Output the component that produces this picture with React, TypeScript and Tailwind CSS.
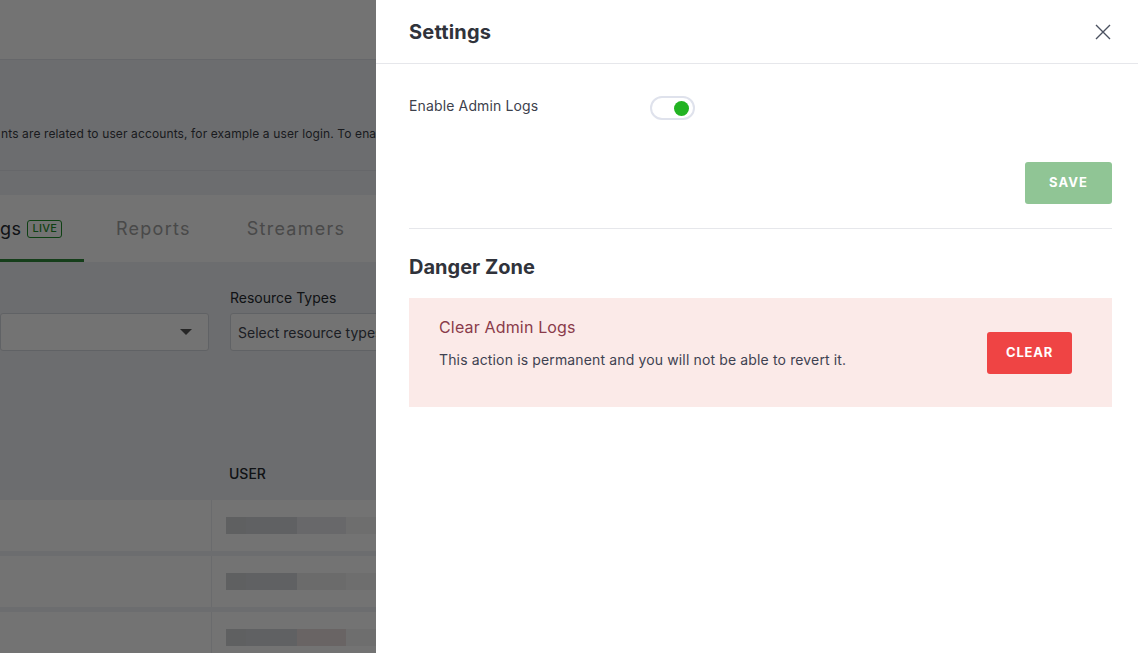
import React, { useState } from 'react';

const font = { fontFamily: 'Inter, "Noto Sans", sans-serif' };

const BlurRow: React.FC<{ tone: string }> = ({ tone }) => (
  <div className="flex items-center h-[17px]">
    <div className="w-[20px] h-full bg-[#d2d4d8]" />
    <div className="w-[51px] h-full bg-[#d6d8dc]" />
    <div className={`w-[49px] h-full ${tone}`} />
    <div className="w-[32px] h-full bg-[#f3f3f3]" />
  </div>
);

const BackgroundPage: React.FC = () => (
  <div className="w-full h-[653px] overflow-hidden bg-[#f0f2f5] flex flex-col" style={font}>
    <div className="h-[60px] bg-white border-b border-[#e3e5ea] shrink-0" />
    <div className="h-[111px] pt-[66px] border-b border-[#e3e5ea] shrink-0">
      <p className="text-[12px] leading-4 text-[#3a3d45] whitespace-nowrap pl-[1px] tracking-[0.01em]">
        nts are related to user accounts, for example a user login. To enable or disable admin logs, use the settings.
      </p>
    </div>
    <div className="h-[24px] shrink-0" />
    <div className="h-[67px] bg-white shrink-0 flex items-end">
      <div className="flex items-center h-full">
        <div className="relative h-full flex items-center w-[84px]">
          <span className="text-[18px] text-[#262a31] tracking-wide">gs</span>
          <span className="ml-[6px] px-[4px] h-[18px] flex items-center rounded-[3px] border border-[#1f8f2a] text-[11px] font-medium text-[#1f8f2a] tracking-wide">
            LIVE
          </span>
          <div className="absolute left-0 right-0 bottom-0 h-[3px] bg-[#2f8a3a]" />
        </div>
        <span className="ml-[32px] text-[18px] text-[#a3a3a3] tracking-[0.07em]">Reports</span>
        <span className="ml-[56px] text-[18px] text-[#a3a3a3] tracking-[0.07em]">Streamers</span>
      </div>
    </div>
    <div className="flex gap-[21px] pt-[26px] shrink-0">
      <div className="w-[209px] pt-[25px]">
        <div className="h-[38px] rounded-[3px] border border-[#d6d9df] bg-white flex items-center justify-end pr-[16px]">
          <span className="w-0 h-0 border-l-[6px] border-r-[6px] border-t-[6px] border-l-transparent border-r-transparent border-t-[#555]" />
        </div>
      </div>
      <div className="w-[300px]">
        <div className="text-[14px] leading-5 text-[#262a31] mb-[5px]">Resource Types</div>
        <div className="h-[38px] rounded-[3px] border border-[#d6d9df] bg-white flex items-center pl-[7px]">
          <span className="text-[14px] text-[#404550]">Select resource types</span>
        </div>
      </div>
    </div>
    <div className="h-[149px] shrink-0 flex items-end pb-[16px] pl-[229px]">
      <span className="text-[14px] font-medium text-[#262a31]">USER</span>
    </div>
    <div className="flex flex-col gap-[5px]">
      {['bg-[#e6e7ea]', 'bg-[#eeeeee]', 'bg-[#e9dede]'].map((tone, i) => (
        <div key={i} className="h-[51px] bg-white flex">
          <div className="w-[212px] border-r border-[#eceef1]" />
          <div className="pl-[14px] flex items-center">
            <BlurRow tone={tone} />
          </div>
        </div>
      ))}
    </div>
  </div>
);

const App: React.FC = () => {
  const [enabled, setEnabled] = useState(true);

  return (
    <div className="relative w-full h-[653px] overflow-hidden" style={font}>
      <BackgroundPage />

      {/* overlay */}
      <div className="absolute inset-0 bg-black/55" />

      {/* drawer */}
      <div className="absolute top-0 right-0 h-full w-[762px] bg-white flex flex-col">
        <div className="h-[64px] shrink-0 border-b border-[#e6e7eb] pl-[33px] pr-[27px] flex items-center justify-between">
          <h2 className="text-[20px] font-bold text-[#30333b] tracking-[0.01em]">Settings</h2>
          <button className="text-[#4b5160]" title="Close">
            <svg width="16" height="16" viewBox="0 0 16 16" fill="none">
              <path d="M1 1L15 15M15 1L1 15" stroke="currentColor" strokeWidth="1.4" />
            </svg>
          </button>
        </div>

        <div className="pl-[33px] pr-[26px] pt-[32px]">
          <div className="flex items-center h-[24px]">
            <span className="w-[241px] text-[14px] leading-5 text-[#3d414c] pb-[5px] tracking-[0.01em]">Enable Admin Logs</span>
            <button
              onClick={() => setEnabled(!enabled)}
              className={`w-[45px] h-[24px] rounded-full border-2 border-[#dfe2ec] bg-white flex items-center px-[4px] ${enabled ? 'justify-end' : 'justify-start'}`}
            >
              <span className={`w-[15px] h-[15px] rounded-full ${enabled ? 'bg-[#22b322]' : 'bg-[#c5c8d0]'}`} />
            </button>
          </div>

          <div className="flex justify-end mt-[42px]">
            <button className="w-[87px] h-[42px] rounded-[3px] bg-[#90c595] text-white text-[13px] font-bold tracking-[0.08em]">
              SAVE
            </button>
          </div>

          <div className="border-t border-[#e6e7eb] mt-[24px]" />

          <h3 className="mt-[24px] text-[20px] leading-7 font-bold text-[#30333b]">Danger Zone</h3>

          <div className="mt-[17px] h-[109px] bg-[#fbeae8] pl-[30px] pr-[40px] flex items-start justify-between">
            <div className="pt-[19px]">
              <div className="text-[16px] leading-5 text-[#8a3b4a] tracking-[0.01em]">Clear Admin Logs</div>
              <div className="mt-[13px] text-[14px] leading-5 text-[#3e4251] tracking-[0.01em]">
                This action is permanent and you will not be able to revert it.
              </div>
            </div>
            <button className="self-center w-[85px] h-[42px] rounded-[3px] bg-[#ef4444] text-white text-[13px] font-bold tracking-[0.06em]">
              CLEAR
            </button>
          </div>
        </div>
      </div>
    </div>
  );
};

export default App;
